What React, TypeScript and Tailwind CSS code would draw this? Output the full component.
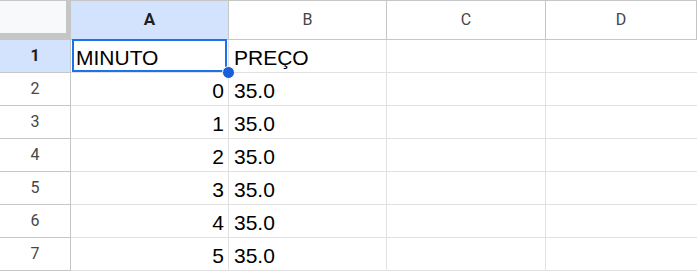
const rows: [string, string][] = [
  ['MINUTO', 'PREÇO'],
  ['0', '35.0'],
  ['1', '35.0'],
  ['2', '35.0'],
  ['3', '35.0'],
  ['4', '35.0'],
  ['5', '35.0'],
];

const cols = ['A', 'B', 'C', 'D'];

export default function App() {
  return (
    <div className="w-[697px] h-[271px] overflow-hidden bg-white">
      <div className="grid grid-cols-[71px_158px_158px_159px_1fr] font-['Liberation_Sans',Arial,sans-serif]">
        {/* header row */}
        <div className="h-[40px] bg-[#f8f9fa] border-t border-r-[5px] border-b-[7px] border-[#c4c7c5]" />
        {cols.map((c, i) => (
          <div
            key={c}
            className={
              i === 0
                ? "h-[40px] flex items-center justify-center border-t border-r border-b border-[#c4c7c5] bg-[#d3e3fd] text-[#1f1f1f] font-bold text-[17px] font-['Roboto',sans-serif]"
                : "h-[40px] flex items-center justify-center border-t border-r border-b border-[#c4c7c5] bg-white text-[#444746] text-[16px] font-['Roboto',sans-serif]"
            }
          >
            {c}
          </div>
        ))}

        {/* data rows */}
        {rows.map(([a, b], r) => {
          const first = r === 0;
          return (
            <div key={r} className="contents">
              <div
                className={
                  first
                    ? "h-[33px] flex items-center justify-center border-r border-b border-[#c4c7c5] bg-[#d3e3fd] text-[#1f1f1f] font-bold text-[16px] font-['Roboto',sans-serif]"
                    : "h-[33px] flex items-center justify-center border-r border-b border-[#c4c7c5] bg-white text-[#444746] text-[16px] font-['Roboto',sans-serif]"
                }
              >
                {r + 1}
              </div>
              <div
                className={
                  first
                    ? 'relative h-[33px] flex items-end justify-start px-[5px] pb-[2px] border-r border-b border-[#e1e1e1] text-[21px] leading-[24px] text-black'
                    : 'h-[33px] flex items-end justify-end px-[4px] pb-[2px] border-r border-b border-[#e1e1e1] text-[21px] leading-[24px] text-black'
                }
              >
                {a}
                {first && (
                  <>
                    <div className="absolute left-px -top-px right-px bottom-0 border-2 border-[#1a73e8]" />
                    <div className="absolute z-10 left-[151px] top-[26px] w-[13px] h-[13px] rounded-full bg-[#1a5fd6] border border-white" />
                  </>
                )}
              </div>
              <div className="h-[33px] flex items-end px-[5px] pb-[2px] border-r border-b border-[#e1e1e1] text-[21px] leading-[24px] text-black">
                {b}
              </div>
              <div className="h-[33px] border-r border-b border-[#e1e1e1]" />
              <div className="h-[33px] border-b border-[#e1e1e1]" />
            </div>
          );
        })}
      </div>
    </div>
  );
}
